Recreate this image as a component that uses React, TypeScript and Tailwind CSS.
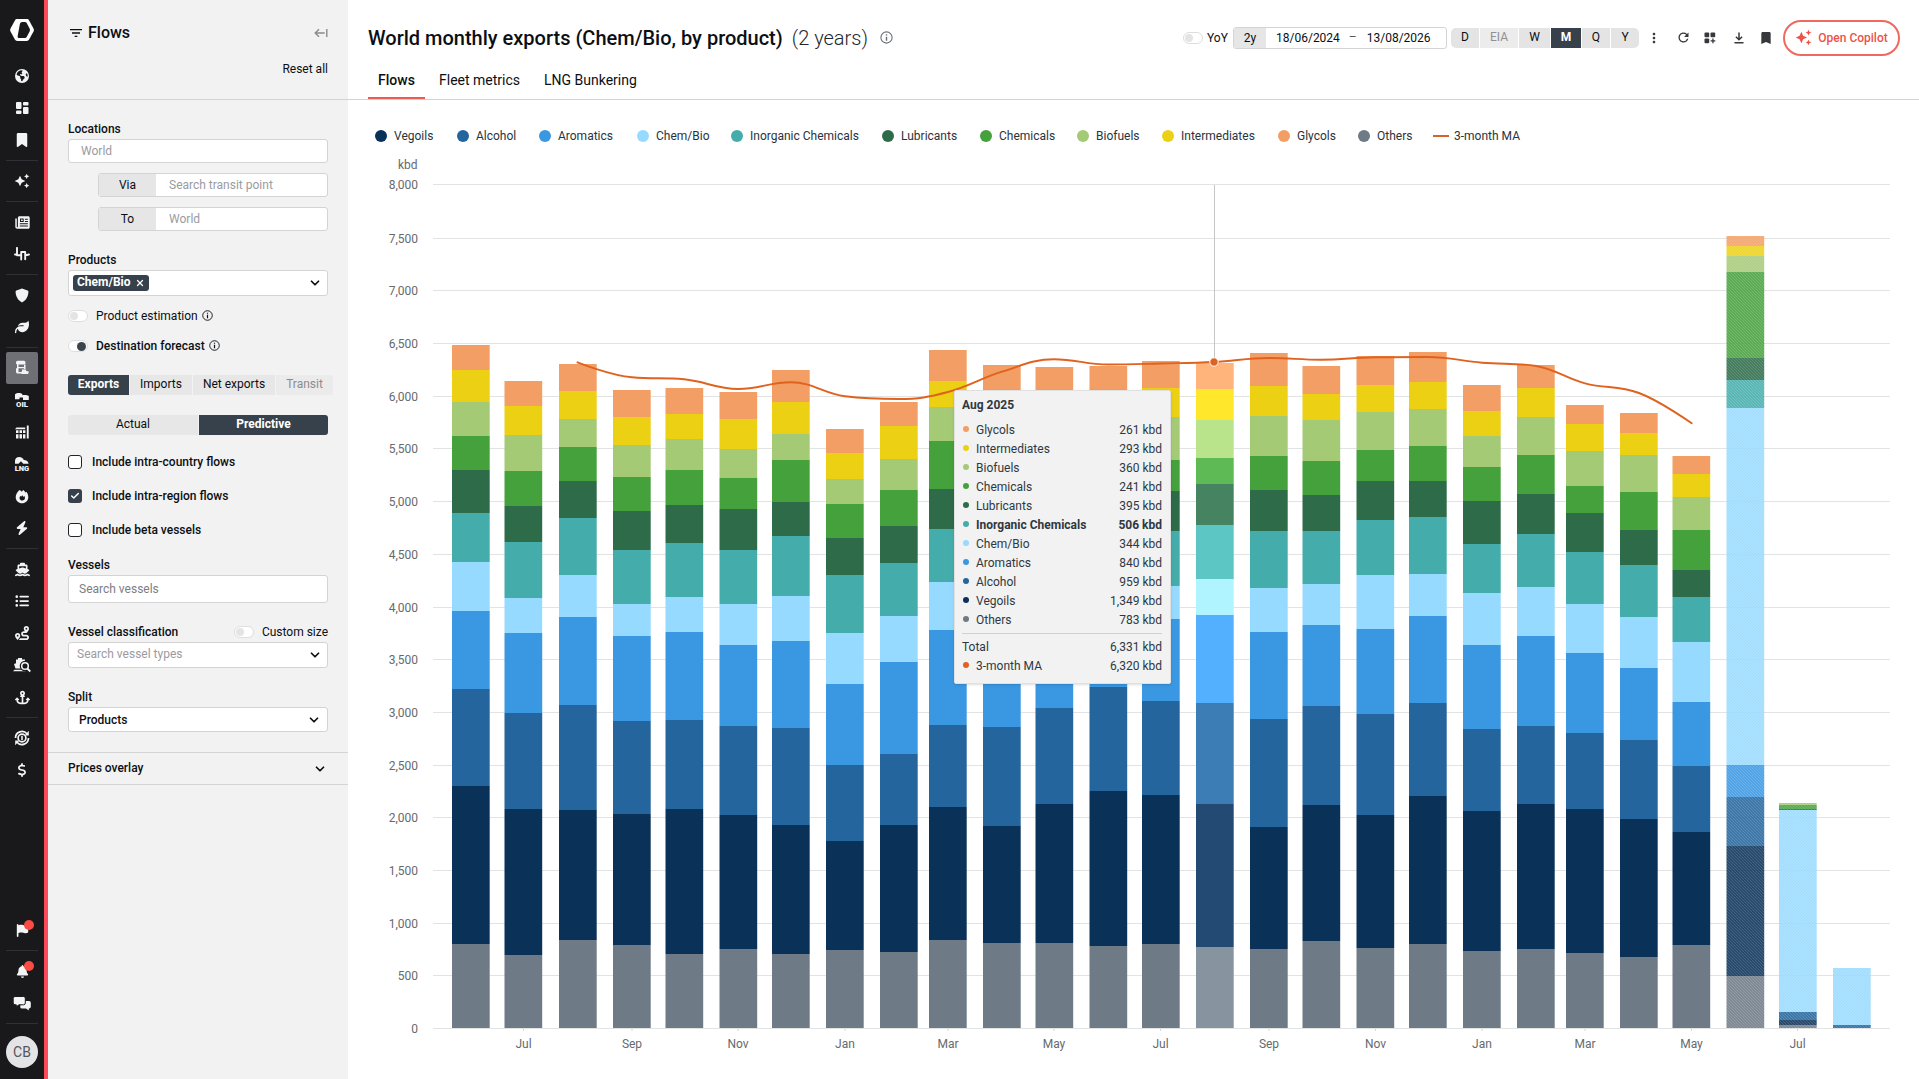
import type { ReactNode } from "react";
import {
	FaAnchor,
	FaBell,
	FaBolt,
	FaBookmark,
	FaDollarSign,
	FaEarthAmericas,
	FaFlag,
	FaLeaf,
	FaListUl,
	FaRoute,
	FaShip,
} from "react-icons/fa6";
import { MdAutoAwesome, MdBookmark, MdFilterList, MdMoreVert, MdRefresh } from "react-icons/md";
import { Check, ChevronDown, X } from "lucide-react";

const SERIES = [
	{ name: "Glycols", color: "#f29e64", hover: "#ffb47c", value: "261" },
	{ name: "Intermediates", color: "#ebd014", hover: "#ffe82b", value: "293" },
	{ name: "Biofuels", color: "#a5ca76", hover: "#bae48c", value: "360" },
	{ name: "Chemicals", color: "#45a13c", hover: "#5dba54", value: "241" },
	{ name: "Lubricants", color: "#2e6b49", hover: "#468461", value: "395" },
	{ name: "Inorganic Chemicals", color: "#44adab", hover: "#5cc6c4", value: "506" },
	{ name: "Chem/Bio", color: "#97daff", hover: "#aff4ff", value: "344" },
	{ name: "Aromatics", color: "#3a97e2", hover: "#52b0fe", value: "840" },
	{ name: "Alcohol", color: "#23659c", hover: "#3c7db5", value: "959" },
	{ name: "Vegoils", color: "#0a3158", hover: "#234a72", value: "1,349" },
	{ name: "Others", color: "#6e7a86", hover: "#87939f", value: "783" },
];

const LEGEND = [
	{ name: "Vegoils", color: "#0a3158", width: 82 },
	{ name: "Alcohol", color: "#23659c", width: 82 },
	{ name: "Aromatics", color: "#3a97e2", width: 98 },
	{ name: "Chem/Bio", color: "#97daff", width: 94 },
	{ name: "Inorganic Chemicals", color: "#44adab", width: 151 },
	{ name: "Lubricants", color: "#2e6b49", width: 98 },
	{ name: "Chemicals", color: "#45a13c", width: 97 },
	{ name: "Biofuels", color: "#a5ca76", width: 85 },
	{ name: "Intermediates", color: "#ebd014", width: 116 },
	{ name: "Glycols", color: "#f29e64", width: 80 },
	{ name: "Others", color: "#6e7a86", width: 75 },
];

// left edge of each month, then the top of every series from Glycols down to Others
const BARS: [number, number[]][] = [
	[452, [345, 370, 402, 436, 470, 513, 562, 611, 689, 786, 944]],
	[504.5, [381, 406, 435, 471, 506, 542, 598, 633, 713, 809, 955]],
	[559, [364, 391, 419, 447, 481, 518, 575, 617, 705, 810, 940]],
	[613, [390, 417, 445, 477, 511, 550, 604, 636, 721, 814, 945]],
	[665.5, [388, 414, 439, 470, 505, 543, 597, 632, 720, 809, 954]],
	[719.5, [392, 419, 449, 478, 509, 550, 604, 645, 726, 815, 949]],
	[772, [370, 402, 434, 460, 502, 536, 596, 641, 728, 825, 954]],
	[826, [429, 453, 479, 504, 538, 575, 633, 684, 765, 841, 950]],
	[880, [402, 426, 459, 490, 526, 563, 616, 662, 754, 825, 952]],
	[929, [350, 381, 407, 441, 489, 529, 582, 630, 725, 807, 940]],
	[983, [365, 392, 418, 452, 490, 530, 585, 630, 727, 826, 943]],
	[1035.5, [367, 394, 420, 454, 492, 532, 587, 632, 708, 804, 943]],
	[1089.5, [366, 392, 420, 456, 492, 532, 587, 630, 687, 791, 946]],
	[1142, [361, 388, 417, 460, 491, 531, 586, 619, 701, 795, 944]],
	[1196, [363, 389, 420, 458, 484, 525, 579, 615, 703, 804, 947]],
	[1250, [353, 386, 416, 456, 490, 531, 588, 632, 719, 827, 949]],
	[1302.5, [366, 394, 420, 461, 495, 531, 584, 625, 706, 805, 941]],
	[1356.5, [356, 385, 412, 450, 481, 520, 575, 629, 714, 815, 948]],
	[1409, [352, 382, 409, 446, 481, 517, 574, 616, 703, 796, 944]],
	[1463, [385, 411, 436, 467, 501, 544, 593, 645, 729, 811, 951]],
	[1517, [365, 388, 417, 455, 494, 534, 587, 636, 726, 804, 949]],
	[1566, [405, 424, 451, 486, 513, 552, 604, 653, 733, 809, 953]],
	[1620, [413, 433, 455, 492, 530, 565, 617, 668, 740, 819, 957]],
	[1672.5, [456, 474, 497, 530, 570, 597, 642, 702, 766, 832, 945]],
	[1726.5, [236, 246, 256, 272, 358, 380, 408, 765, 797, 846, 976]],
	[1779, [803, 804, 804, 805, 809, 810, 810, 1012, 1012, 1020, 1025]],
	[1833, [968, 968, 968, 968, 968, 968, 968, 1025, 1025, 1028, 1028]],
];

const BASELINE = 1028;
const BAR_WIDTH = 37.7;
const HOVERED = 14;
const FIRST_FORECAST = 24;

const GRID = [184, 238, 290, 343, 396, 448, 501, 554, 607, 659, 712, 765, 817, 870, 923, 975, 1028];

const MONTHS: [string, number][] = [
	["Jul", 523.5],
	["Sep", 632],
	["Nov", 738],
	["Jan", 845],
	["Mar", 948],
	["May", 1054],
	["Jul", 1160.5],
	["Sep", 1269],
	["Nov", 1375.5],
	["Jan", 1482],
	["Mar", 1585],
	["May", 1691.5],
	["Jul", 1797.5],
];

const AVERAGE: [number, number][] = [
	[577.5, 362.3],
	[632, 377.3],
	[684, 379.3],
	[738, 389],
	[791, 382.3],
	[845, 396.3],
	[899, 399],
	[948, 392],
	[1002, 371.7],
	[1054, 359.3],
	[1108, 364.5],
	[1161, 363.5],
	[1214, 362],
	[1269, 358],
	[1321, 359.7],
	[1375, 357.3],
	[1428, 357],
	[1482, 362.7],
	[1536, 366],
	[1585, 383.3],
	[1639, 393],
	[1691.7, 423.3],
];

const spline = (points: [number, number][]) => {
	let d = `M${points[0][0]} ${points[0][1]}`;
	let out = points[0];
	for (let i = 1; i < points.length; i++) {
		const [x, y] = points[i];
		const prev = points[i - 1];
		const next = points[i + 1];
		if (!next) {
			d += `C${out[0]} ${out[1]} ${x} ${y} ${x} ${y}`;
			break;
		}
		const lx = (1.5 * x + prev[0]) / 2.5;
		const rx = (1.5 * x + next[0]) / 2.5;
		let ly = (1.5 * y + prev[1]) / 2.5;
		let ry = (1.5 * y + next[1]) / 2.5;
		const shift = ((ry - ly) * (rx - x)) / (rx - lx) + y - ry;
		ly += shift;
		ry += shift;
		if (ly > prev[1] && ly > y) {
			ly = Math.max(prev[1], y);
			ry = 2 * y - ly;
		} else if (ly < prev[1] && ly < y) {
			ly = Math.min(prev[1], y);
			ry = 2 * y - ly;
		}
		if (ry > next[1] && ry > y) {
			ry = Math.max(next[1], y);
			ly = 2 * y - ry;
		} else if (ry < next[1] && ry < y) {
			ry = Math.min(next[1], y);
			ly = 2 * y - ry;
		}
		d += `C${out[0]} ${out[1]} ${lx} ${ly} ${x} ${y}`;
		out = [rx, ry];
	}
	return d;
};

const Logo = () => (
	<svg width="24" height="22" viewBox="0 0 24 22" fill="#fff">
		<path d="M7.2 0h9.6c1 0 1.8.5 2.3 1.4l4.4 8c.5 1 .5 2.2 0 3.2l-4.4 8c-.5.9-1.3 1.4-2.3 1.4H7.2c-1 0-1.8-.5-2.3-1.4l-4.4-8c-.5-1-.5-2.2 0-3.2l4.4-8C5.4.5 6.2 0 7.2 0z" />
		<path d="M12.3 3h2.6c.8 0 1.4.4 1.8 1.1l3 5.7c.4.8.4 1.6 0 2.4l-3 5.7c-.4.7-1 1.1-1.8 1.1H9.3c-1.3 0-1.9-.9-1.6-2.3L9.900 5c.3-1.300 1.100-2 2.400-2z" fill="#19191b" />
	</svg>
);

const DashboardIcon = () => (
	<svg width="14" height="14" viewBox="0 0 14 14" fill="currentColor">
		<rect x="1" y="1" width="5.5" height="7" rx="1" />
		<rect x="1" y="9.5" width="5.5" height="3.5" rx="1" />
		<rect x="8" y="1" width="5.5" height="3.5" rx="1" />
		<rect x="8" y="6" width="5.5" height="7" rx="1" />
	</svg>
);

const NewsIcon = () => (
	<svg width="15" height="13" viewBox="0 0 15 13" fill="currentColor">
		<path d="M4.500.3h8.700c.9 0 1.500.6 1.500 1.500v9.400c0 .9-.6 1.500-1.500 1.500H2.300C1.100 12.700.3 11.900.3 10.700V2.500h1.500v8.200c0 .4.2.6.500.6s.6-.2.6-.6V1.800C2.900.9 3.600.3 4.500.3z" />
		<path d="M9.900 2.700h3v1h-3zM9.900 5h3v1h-3zM4.800 7.300h8.100v1H4.800zM4.800 9.600h8.100v1H4.800zM5 2.500h3.700v3.600H5z" fill="#19191b" />
		<path d="M6 3.500h1.700v1.600H6z" />
	</svg>
);

const PulseIcon = () => (
	<svg width="16" height="14" viewBox="0 0 16 14" fill="none" stroke="currentColor" strokeWidth="1.900" strokeLinecap="round" strokeLinejoin="round">
		<path d="M1 7.500h2M3 .9v7.300h4.200M7.200 5v7.500M7.200 5h4v7.300M11.200 8h1.800l2-.5" />
	</svg>
);

const ShieldIcon = () => (
	<svg width="14" height="15" viewBox="0 0 14 15" fill="currentColor">
		<path d="M7 .5l5.600 2c.5.2.8.6.8 1.100C13.400 8.500 11 12.600 7 14.500 3 12.600.6 8.500.6 3.600c0-.5.3-.9.8-1.100z" />
	</svg>
);

const BarrelIcon = () => (
	<svg width="16" height="16" viewBox="0 0 16 16" fill="currentColor">
		<rect x="2" y=".8" width="9.500" height="3.700" rx="1.600" />
		<path d="M3 4h1.500v8H8v1.600H4.200C2.500 13.600 2 12.800 2 11.500V8.200h1zM10 4.500h1.500V9H10zM4 7h6v1.300H4z" />
		<path d="M8 9.500h4v1.200l3 1-1 2.200H7.500L6.800 12l1.200-.5z" />
	</svg>
);

const TankIcon = ({ label, dome }: { label: string; dome?: boolean }) => (
	<svg width="16" height="16" viewBox="0 0 16 16" fill="currentColor">
		{dome ? (
			<path d="M1 7.800V5c0-2.300 1.900-3.900 4.200-3.900C7.500 1.100 9.300 2.500 9.700 4c2.600 0 4.800 1.400 4.900 3.800H9.300L7 5.300 4.500 7.800z" />
		) : (
			<path d="M1 2.500C1 1.600 3 1 4.800 1s3.600.6 3.600 1.500v.8C9.300 3 13 2.800 14.800 4v4H9V5.500H5.500v1.800H1z" />
		)}
		<text x="8" y="15" textAnchor="middle" fontSize="7.500" fontWeight="900" fontFamily="Roboto, sans-serif" textLength={dome ? 14.500 : 12} lengthAdjust="spacingAndGlyphs">
			{label}
		</text>
	</svg>
);

const StorageIcon = () => (
	<svg width="16" height="16" viewBox="0 0 16 16" fill="currentColor">
		<path d="M1 5.200l1.500-1.700h8.700V5.200z" />
		<path d="M2 6.200h2.500V9H2zM5.500 6.200H8V9H5.500zM9 6.200h2.400V9H9zM2 10.200h2.500v4.300H2zM5.500 10.200H8v4.300H5.500zM9 10.200h2.400v4.300H9z" />
		<path d="M12.800 1.500h1.900v13h-1.900z" />
	</svg>
);

const FlameIcon = () => (
	<svg width="14" height="15" viewBox="0 0 14 15" fill="currentColor">
		<path d="M4.500 1c1 .5 1.700 1 2.300 1.700.4-.6.9-1.200 1.500-1.600 1 .7 1.700 1.600 2.200 2.400.3-.3.500-.5.900-.8 1.200 1.500 1.900 3.600 1.900 5.500 0 3.400-2.800 6-6.300 6S.7 11.600.7 8.200C.7 5.500 2.400 2.800 4.500 1z" />
		<path d="M7 6.300c.9.400 1.300 1 1.500 1.700.4-.2.700-.5.800-.9 1.200 1.500.9 4.400-2 4.500-2.700 0-3.600-2.600-1.900-4.500.4.300.8.500 1.100.5.200-.4.400-.8.500-1.300z" fill="#19191b" />
	</svg>
);

const ShipSearchIcon = () => (
	<svg width="18" height="16" viewBox="0 0 18 16" fill="currentColor">
		<path d="M5 2.500V1h4v1.500h3V6l2 .8-1.500 4.700h-10L1 7l2-.8V2.500zM0 14.200l1.500-1.500h10l1.500 1.500z" />
		<circle cx="12" cy="9" r="3.600" stroke="#19191b" strokeWidth="3.400" />
		<circle cx="12" cy="9" r="3.300" fill="#19191b" stroke="currentColor" strokeWidth="1.500" />
		<path d="M14.300 11.500l3 3" stroke="currentColor" strokeWidth="1.900" />
	</svg>
);

const ExchangeIcon = () => (
	<svg width="16" height="16" viewBox="0 0 16 16" fill="none" stroke="currentColor" strokeWidth="1.700">
		<circle cx="8" cy="8" r="3.900" />
		<path d="M1.500 8A6.500 6.500 0 0 1 13 3.800M14.500 8A6.500 6.500 0 0 1 3 12.200" />
		<path d="M14.800.8v4.600h-4.200zM1.200 15.200v-4.600h4.200z" fill="currentColor" stroke="none" />
		<path d="M8 5.800v4.400M7 7h2M7 9h2" strokeWidth="1.100" />
	</svg>
);

const ChatIcon = () => (
	<svg width="18" height="15" viewBox="0 0 18 15" fill="currentColor">
		<path d="M8 5h8a1.800 1.800 0 0 1 1.800 1.800v4A1.800 1.800 0 0 1 16 12.500h-.2v2L13 12.500H9A1.800 1.800 0 0 1 7.200 11z" />
		<path d="M2 .5h8.500a1.800 1.800 0 0 1 1.800 1.800V7A1.800 1.800 0 0 1 10.500 8.800H6l-2.700 2v-2H2A1.800 1.800 0 0 1 .2 7V2.300A1.800 1.800 0 0 1 2 .5z" stroke="#19191b" strokeWidth="1" />
	</svg>
);

const WidgetAddIcon = () => (
	<svg width="12" height="12" viewBox="0 0 12 12" fill="currentColor">
		<rect x=".5" y=".5" width="4.700" height="4.700" rx="1" />
		<rect x="6.500" y=".5" width="4.700" height="4.700" rx="1" />
		<rect x=".5" y="6.500" width="4.700" height="4.700" rx="1" />
		<path d="M8.300 6.600h1.300v1.700h1.700v1.300H9.600v1.700H8.300V9.600H6.600V8.300h1.700z" />
	</svg>
);

const DownloadIcon = () => (
	<svg width="10" height="12" viewBox="0 0 10 12" fill="none" stroke="currentColor" strokeWidth="1.500">
		<path d="M5 .5v7M1.900 4.700L5 7.800l3.100-3.100M.5 10.800h9" />
	</svg>
);

const InfoIcon = ({ size = 11 }: { size?: number }) => (
	<svg width={size} height={size} viewBox="0 0 12 12" fill="none" stroke="currentColor" strokeWidth="1">
		<circle cx="6" cy="6" r="5.200" />
		<path d="M6 5.200v3.700M6 2.900v1.300" strokeWidth="1.300" />
	</svg>
);

const NavItem = ({ children, active }: { children: ReactNode; active?: boolean }) => (
	<div
		className={
			active
				? "relative flex h-8 w-8 shrink-0 items-center justify-center rounded-[2px] bg-[#6f6f76]"
				: "relative flex h-8 w-8 shrink-0 items-center justify-center"
		}
	>
		{children}
	</div>
);

const NavDivider = () => (
	<div className="flex h-[9px] w-8 shrink-0 items-center">
		<div className="h-px w-full bg-[#2f3036]" />
	</div>
);

const Dot = () => <span className="absolute top-[6px] right-[4px] h-[10px] w-[10px] rounded-full bg-[#fb4b42]" />;

const Sidebar = () => (
	<nav className="flex w-12 shrink-0 flex-col items-center border-r-4 border-[#fb4a59] bg-[#19191b] text-[#f3f4f6]">
		<div className="flex h-[60px] shrink-0 items-center">
			<Logo />
		</div>
		<NavItem><FaEarthAmericas size={14} /></NavItem>
		<NavItem><DashboardIcon /></NavItem>
		<NavItem><FaBookmark size={14} /></NavItem>
		<NavDivider />
		<NavItem><MdAutoAwesome size={16} /></NavItem>
		<NavDivider />
		<NavItem><NewsIcon /></NavItem>
		<NavItem><PulseIcon /></NavItem>
		<NavDivider />
		<NavItem><ShieldIcon /></NavItem>
		<NavItem><FaLeaf size={14} /></NavItem>
		<NavDivider />
		<NavItem active><BarrelIcon /></NavItem>
		<NavItem><TankIcon label="OIL" /></NavItem>
		<NavItem><StorageIcon /></NavItem>
		<NavItem><TankIcon label="LNG" dome /></NavItem>
		<NavItem><FlameIcon /></NavItem>
		<NavItem><FaBolt size={14} /></NavItem>
		<NavDivider />
		<NavItem><FaShip size={15} /></NavItem>
		<NavItem><FaListUl size={14} /></NavItem>
		<NavItem><FaRoute size={14} /></NavItem>
		<NavItem><ShipSearchIcon /></NavItem>
		<NavItem><FaAnchor size={15} /></NavItem>
		<NavDivider />
		<NavItem><ExchangeIcon /></NavItem>
		<NavItem><FaDollarSign size={14} /></NavItem>
		<div className="grow" />
		<NavItem><FaFlag size={13} /><Dot /></NavItem>
		<NavDivider />
		<NavItem><FaBell size={13} /><Dot /></NavItem>
		<NavItem><ChatIcon /></NavItem>
		<NavDivider />
		<div className="mt-2 mb-[11px] flex h-8 w-8 shrink-0 items-center justify-center rounded-full bg-[#e4e4e6] text-[14px] text-[#55565c]">
			CB
		</div>
	</nav>
);

const Toggle = ({ on }: { on?: boolean }) => (
	<span className="flex h-[12px] w-5 shrink-0 items-center rounded-full border border-[#dedede] bg-white px-px">
		<span className={on ? "ml-auto h-[9px] w-[9px] rounded-full bg-[#3b434c]" : "h-[8px] w-[8px] rounded-full bg-[#e4e4e4]"} />
	</span>
);

const Chevron = () => <ChevronDown className="shrink-0 text-[#0b0f14]" size={14} strokeWidth={3} />;

const Checkbox = ({ label, checked }: { label: string; checked?: boolean }) => (
	<label className="flex h-[34px] items-center gap-[10px] font-medium">
		<span
			className={
				checked
					? "flex h-[14px] w-[14px] items-center justify-center rounded-[3px] bg-[#37414b] text-white"
					: "h-[14px] w-[14px] rounded-[3px] border border-[#22262b] bg-white"
			}
		>
			{checked && <Check size={10} strokeWidth={3.500} />}
		</span>
		{label}
	</label>
);

const PrefixedInput = ({ prefix, placeholder }: { prefix: string; placeholder: string }) => (
	<div className="ml-[30px] flex h-6 overflow-hidden rounded-[3px] border border-[#d4d4d4] bg-white leading-[22px]">
		<span className="w-[57px] bg-[#e6e6e6] text-center">{prefix}</span>
		<span className="pl-[13px] text-[#9b9ba1]">{placeholder}</span>
	</div>
);

const Filters = () => (
	<aside className="flex w-[300px] shrink-0 flex-col bg-[#f2f2f2] text-[12px] leading-4 text-[#0b0f14]">
		<header className="h-[100px] shrink-0 border-b border-[#d0d4d4] px-5">
			<div className="mt-[21px] flex h-6 items-center">
				<MdFilterList size={16} />
				<span className="ml-1 text-[16px] font-medium">Flows</span>
				<svg className="ml-auto text-[#8b8b8b]" width="14" height="10" viewBox="0 0 14 10" fill="none" stroke="currentColor" strokeWidth="1.400">
					<path d="M5 1.200L1.200 5 5 8.800M1.200 5h9.500M12.800 1v8" />
				</svg>
			</div>
			<div className="mt-4 text-right">Reset all</div>
		</header>

		<section className="flex h-[653px] shrink-0 flex-col border-b border-[#d4d4d4] px-5">
			<div className="mt-[21px] font-medium">Locations</div>
			<div className="mt-[2px] h-6 rounded-[3px] border border-[#d4d4d4] bg-white pl-3 leading-[22px] text-[#9b9ba1]">World</div>
			<div className="mt-[10px]"><PrefixedInput prefix="Via" placeholder="Search transit point" /></div>
			<div className="mt-[10px]"><PrefixedInput prefix="To" placeholder="World" /></div>

			<div className="mt-[21px] font-medium">Products</div>
			<div className="mt-[2px] flex h-[26px] items-center justify-between rounded-[3px] border border-[#d4d4d4] bg-white pr-[5px] pl-1">
				<span className="flex h-4 items-center gap-1 rounded-[3px] bg-[#37414b] px-1 font-bold leading-[14px] text-white">
					<span className="-mt-[2px]">Chem/Bio</span> <X size={10} strokeWidth={3} />
				</span>
				<Chevron />
			</div>

			<div className="mt-3 flex h-4 items-center">
				<Toggle />
				<span className="ml-2">Product estimation</span>
				<span className="mb-[2px] ml-1"><InfoIcon /></span>
			</div>
			<div className="mt-[14px] flex h-4 items-center">
				<Toggle on />
				<span className="ml-2 font-medium">Destination forecast</span>
				<span className="mb-[2px] ml-1"><InfoIcon /></span>
			</div>

			<div className="mt-[21px] flex h-5 w-[265px] gap-px text-center leading-[19px]">
				<span className="w-[61px] rounded-l-[3px] bg-[#37414b] font-bold text-white">Exports</span>
				<span className="w-[62px] bg-[#e7e7e7]">Imports</span>
				<span className="w-[82px] bg-[#e7e7e7]">Net exports</span>
				<span className="w-[57px] rounded-r-[3px] bg-[#ebebeb] text-[#8b8b8f]">Transit</span>
			</div>
			<div className="mt-5 flex h-5 gap-px text-center leading-[18px]">
				<span className="w-[130px] rounded-l-[3px] bg-[#e7e7e7]">Actual</span>
				<span className="w-[129px] rounded-r-[3px] bg-[#37414b] font-bold text-white">Predictive</span>
			</div>

			<div className="mt-[10px]">
				<Checkbox label="Include intra-country flows" />
				<Checkbox label="Include intra-region flows" checked />
				<Checkbox label="Include beta vessels" />
			</div>

			<div className="mt-[10px] font-medium">Vessels</div>
			<div className="mt-[2px] h-7 rounded-[3px] border border-[#d4d4d4] bg-white pl-[10px] leading-[26px] text-[#7d7d82]">Search vessels</div>

			<div className="mt-[21px] flex h-4 items-center">
				<span className="grow font-medium">Vessel classification</span>
				<Toggle />
				<span className="ml-2">Custom size</span>
			</div>
			<div className="mt-[2px] flex h-[26px] items-center justify-between rounded-[3px] border border-[#d4d4d4] bg-white pr-[5px] pl-2 text-[#9b9ba1]">
				<span className="-mt-[2px]">Search vessel types</span>
				<Chevron />
			</div>

			<div className="mt-[21px] font-medium">Split</div>
			<div className="mt-[2px] flex h-[25px] items-center justify-between rounded-[3px] border border-[#d4d4d4] bg-white pr-[6px] pl-[10px] font-medium">
				Products
				<Chevron />
			</div>
		</section>

		<section className="flex h-8 shrink-0 items-center justify-between border-b border-[#d4d4d4] pr-[21px] pl-5 font-medium">
			<span className="-mt-[2px]">Prices overlay</span>
			<Chevron />
		</section>
	</aside>
);

const Toolbar = () => (
	<div className="ml-auto flex items-center text-[12px] text-[#0b0f14]">
		<Toggle />
		<span className="ml-1 w-[26px]">YoY</span>
		<div className="flex h-[22px] w-[214px] overflow-hidden rounded-[3px] border border-[#d4d4d4] leading-5">
			<span className="w-[32px] bg-[#e6e6e6] text-center">2y</span>
			<span className="ml-[10px]">18/06/2024</span>
			<span className="-mt-px ml-[9px] text-[#55585c]">–</span>
			<span className="ml-[10px]">13/08/2026</span>
		</div>
		<div className="ml-1 flex h-5 gap-px overflow-hidden rounded-[5px] text-center leading-[18px]">
			<span className="w-[28px] bg-[#e4e4e4]">D</span>
			<span className="w-[38px] bg-[#ececec] text-[#8f8f93]">EIA</span>
			<span className="w-[31px] bg-[#e4e4e4]">W</span>
			<span className="w-[30px] bg-[#37414b] font-bold text-white">M</span>
			<span className="w-[28px] bg-[#e4e4e4]">Q</span>
			<span className="w-[28px] bg-[#e4e4e4]">Y</span>
		</div>
		<div className="ml-[7px] flex w-[128px] items-center justify-between text-[#37383c]">
			<MdMoreVert size={16} />
			<MdRefresh size={15} />
			<WidgetAddIcon />
			<span className="ml-1"><DownloadIcon /></span>
			<span className="ml-px"><MdBookmark size={16} /></span>
		</div>
		<button className="ml-[9px] flex h-9 w-[117px] items-center justify-center gap-[6px] rounded-full border-2 border-[#ee6a60] text-[#ee5248]">
			<MdAutoAwesome size={17} />
			<span className="font-medium">Open Copilot</span>
		</button>
	</div>
);

const Header = () => (
	<header className="flex h-[100px] shrink-0 flex-col border-b border-[#d0d4d4] pr-[19px] pl-5">
		<div className="flex h-[76px] w-[1532px] items-center">
			<h1 className="mt-px text-[20px] font-medium text-[#0b0f14]">World monthly exports (Chem/Bio, by product)</h1>
			<span className="mt-px ml-[9px] text-[20px] font-light text-[#24282d]">(2 years)</span>
			<span className="ml-3 text-[#6b6f75]"><InfoIcon size={13} /></span>
			<Toolbar />
		</div>
		<div className="-mt-[14px] flex h-[38px] text-[14px] leading-[38px] text-[#0b0f14]">
			<span className="h-[38px] w-[57px] border-b-2 border-[#ee5a50] text-center font-medium">Flows</span>
			<span className="ml-[14px]">Fleet metrics</span>
			<span className="ml-6">LNG Bunkering</span>
		</div>
	</header>
);

const Legend = () => (
	<div className="flex h-[72px] shrink-0 items-center pb-px pl-[27px] text-[12px] text-[#2a333c]">
		{LEGEND.map((item) => (
			<div key={item.name} className="flex shrink-0 items-center gap-[7px] whitespace-nowrap" style={{ width: item.width }}>
				<span className="h-3 w-3 shrink-0 rounded-full" style={{ background: item.color }} />
				{item.name}
			</div>
		))}
		<div className="flex items-center gap-[5px]">
			<span className="h-[2px] w-4 bg-[#d9622b]" />
			3-month MA
		</div>
	</div>
);

const Chart = () => (
	<svg className="block" width="1571" height="907" viewBox="348 172 1571 907" fontFamily="Roboto, sans-serif" fontSize="12">
		<defs>
			<pattern id="hatch" width="3" height="3" patternUnits="userSpaceOnUse">
				<path d="M-1 -1L4 4M-1 2L1 4M2 -1L4 1" stroke="#fff" strokeWidth="0.900" strokeOpacity="0.160" />
			</pattern>
		</defs>
		{GRID.map((y, i) => (
			<g key={y}>
				<rect x="433" y={y} width="1457" height="1" fill="#e2e4e4" />
				<text x="418" y={y + 5} textAnchor="end" fill="#666a6e">
					{(8000 - i * 500).toLocaleString("en-US")}
				</text>
			</g>
		))}
		<rect x="1214" y="185" width="1" height="843" fill="#c4c6c8" />
		{BARS.map(([x, tops], i) => (
			<g key={x}>
				{tops.map((top, s) => {
					const bottom = tops[s + 1] ?? BASELINE;
					if (bottom <= top) return null;
					return (
						<rect
							key={s}
							x={x}
							y={top}
							width={BAR_WIDTH}
							height={bottom - top}
							fill={i === HOVERED ? SERIES[s].hover : SERIES[s].color}
							fillOpacity={i >= FIRST_FORECAST ? 0.880 : 1}
						/>
					);
				})}
				{i >= FIRST_FORECAST && <rect x={x} y={tops[0]} width={BAR_WIDTH} height={BASELINE - tops[0]} fill="url(#hatch)" />}
			</g>
		))}
		{MONTHS.map(([label, x]) => (
			<g key={x}>
				<rect x={x - 0.500} y="1029" width="1" height="2" fill="#d4d6d8" />
				<text x={x} y="1048" textAnchor="middle" fill="#666a6e">
					{label}
				</text>
			</g>
		))}
		<path d={spline(AVERAGE)} fill="none" stroke="#e0621f" strokeWidth="1.900" strokeLinecap="round" />
		<circle cx="1214" cy="362" r="4.200" fill="#e0621f" stroke="#fff" strokeWidth="1" />
	</svg>
);

const TooltipRow = ({ name, value, color, bold }: { name: string; value: string; color?: string; bold?: boolean }) => (
	<div className={bold ? "flex h-[19px] items-center font-bold" : "flex h-[19px] items-center"}>
		{color && <span className="mr-[7px] mb-[2px] ml-[1px] h-[6px] w-[6px] rounded-full" style={{ background: color }} />}
		<span className="grow">{name}</span>
		<span>{value} kbd</span>
	</div>
);

const Tooltip = () => (
	<div className="absolute top-[218px] left-[606px] h-[294px] w-[217px] rounded-[2px] border border-[#e0e0e0] bg-[#f2f2f2] pt-[5px] pr-2 pl-[7px] text-[12px] text-[#2f3841] shadow-sm">
		<div className="mb-[5px] h-[19px] leading-[19px] font-bold">Aug 2025</div>
		{SERIES.map((s) => (
			<TooltipRow key={s.name} name={s.name} value={s.value} color={s.color} bold={s.name === "Inorganic Chemicals"} />
		))}
		<div className="mt-[4px] mb-[3px] h-px bg-[#cfd1d3]" />
		<TooltipRow name="Total" value="6,331" />
		<TooltipRow name="3-month MA" value="6,320" color="#e0621f" />
	</div>
);

export default function App() {
	return (
		<div className="flex h-[1079px] w-[1919px] overflow-hidden bg-white font-[Roboto,sans-serif]">
			<Sidebar />
			<Filters />
			<main className="flex w-[1571px] flex-col">
				<Header />
				<Legend />
				<div className="relative">
					<div className="absolute top-[-15px] left-[50px] text-[12px] leading-4 text-[#666a6e]">kbd</div>
					<Chart />
					<Tooltip />
				</div>
			</main>
		</div>
	);
}
